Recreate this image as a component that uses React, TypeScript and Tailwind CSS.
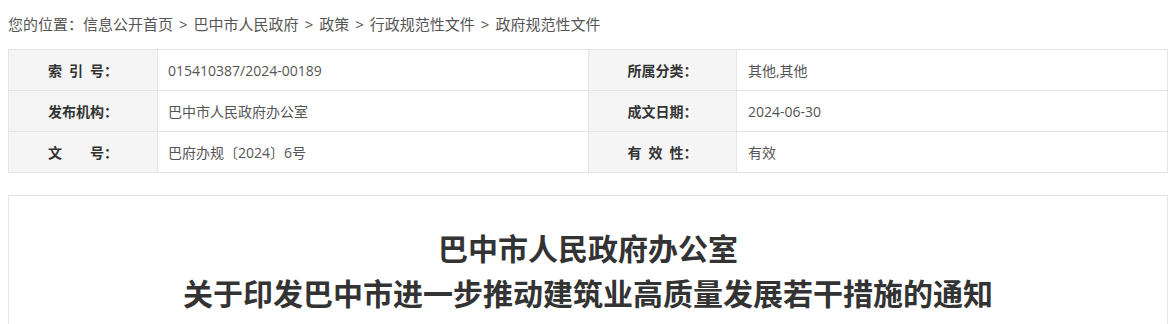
export default function App() {
  const rows = [
    ["索\u2002引\u2002号：", "015410387/2024-00189", "所属分类：", "其他,其他"],
    ["发布机构：", "巴中市人民政府办公室", "成文日期：", "2024-06-30"],
    ["文　　号：", "巴府办规〔2024〕6号", "有\u2002效\u2002性：", "有效"],
  ];
  const crumbs = ["信息公开首页", "巴中市人民政府", "政策", "行政规范性文件", "政府规范性文件"];

  return (
    <div className="min-h-[324px] bg-white font-['Open_Sans','Noto_Sans_CJK_SC',sans-serif]">
      {/* breadcrumb */}
      <div className="h-[49px] pl-[8px] pt-[9px] text-[15px] leading-[30px] text-[#555]">
        您的位置：
        {crumbs.map((c, i) => (
          <span key={i}>
            {i > 0 && <span className="px-[6px]">&gt;</span>}
            {c}
          </span>
        ))}
      </div>

      {/* info table */}
      <div className="ml-[8px] grid w-[1160px] grid-cols-[149px_431px_148px_431px] border-t border-l border-[#e5e5e5] text-[14px]">
        {rows.map((r, i) => (
          <div key={i} className="contents">
            <div className="flex h-[41px] items-center justify-center border-r border-b border-[#e5e5e5] bg-[#f5f5f5] font-bold text-[#333]">
              {r[0]}
            </div>
            <div className="flex h-[41px] items-center border-r border-b border-[#e5e5e5] pl-[10px] text-[#555]">
              {r[1]}
            </div>
            <div className="flex h-[41px] items-center justify-center border-r border-b border-[#e5e5e5] bg-[#f5f5f5] font-bold text-[#333]">
              {r[2]}
            </div>
            <div className="flex h-[41px] items-center border-r border-b border-[#e5e5e5] pl-[11px] text-[#555]">
              {r[3]}
            </div>
          </div>
        ))}
      </div>

      {/* article */}
      <div className="mt-[22px] ml-[8px] w-[1160px] border border-[#e5e5e5] pt-[30px] pb-[20px]">
        <h1 className="text-center text-[30px] leading-[45px] font-bold text-[#333]">
          巴中市人民政府办公室
          <br />
          关于印发巴中市进一步推动建筑业高质量发展若干措施的通知
        </h1>
      </div>
    </div>
  );
}
